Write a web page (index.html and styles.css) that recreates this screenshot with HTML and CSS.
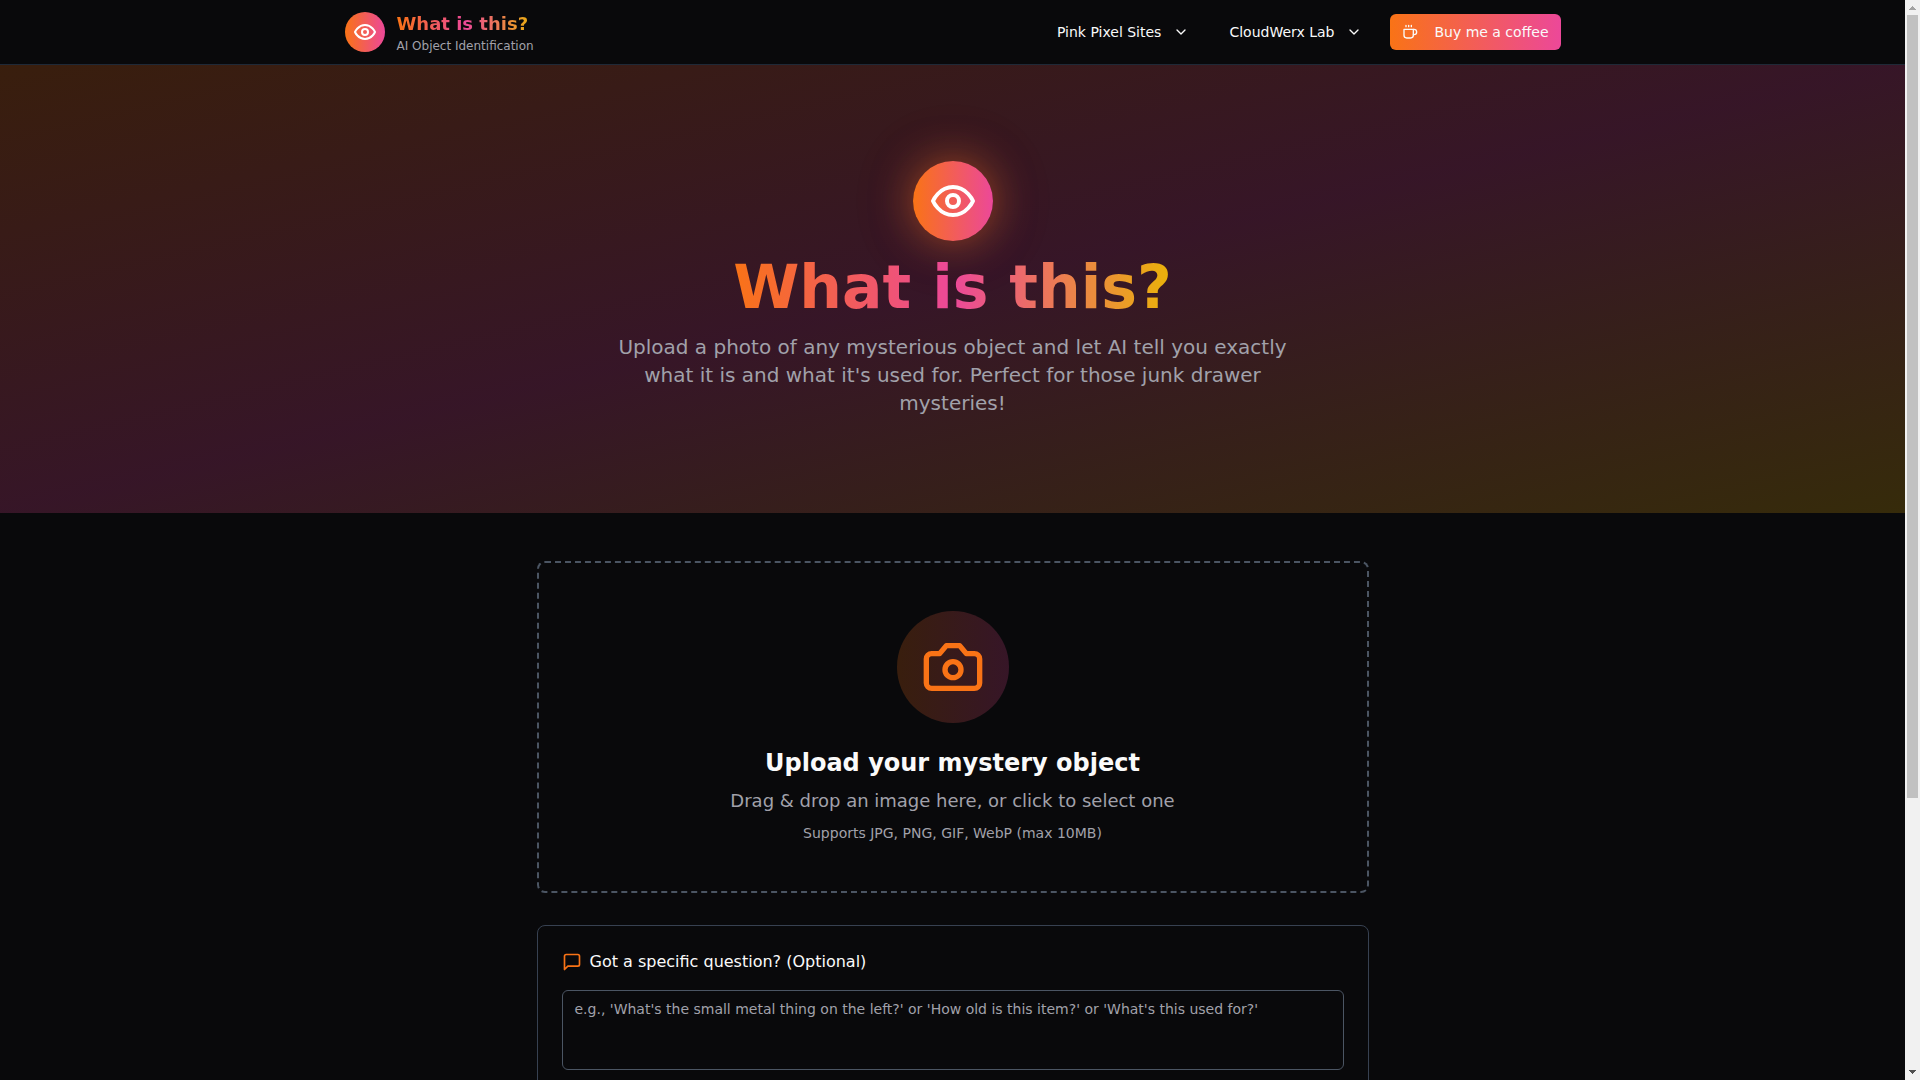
FILE: index.html
```html
<!DOCTYPE html>
<html lang="en">
<head>
<meta charset="utf-8">
<meta name="viewport" content="width=device-width, initial-scale=1">
<title>What is this? - AI Object Identification</title>
<link rel="stylesheet" href="styles.css">
</head>
<body>
<div class="page">
  <header class="site-header">
    <div class="header-inner">
      <a class="brand" href="#">
        <span class="brand-mark">
          <svg class="icon icon-24" viewBox="0 0 24 24" aria-hidden="true"><path d="M2 12s3-7 10-7 10 7 10 7-3 7-10 7-10-7-10-7Z"/><circle cx="12" cy="12" r="3"/></svg>
        </span>
        <span class="brand-text">
          <span class="brand-name gradient-text">What is this?</span>
          <span class="brand-tag">AI Object Identification</span>
        </span>
      </a>
      <nav class="nav">
        <button class="nav-button" type="button">Pink Pixel Sites
          <svg class="icon icon-16" viewBox="0 0 24 24" aria-hidden="true"><path d="m6 9 6 6 6-6"/></svg>
        </button>
        <button class="nav-button" type="button">CloudWerx Lab
          <svg class="icon icon-16" viewBox="0 0 24 24" aria-hidden="true"><path d="m6 9 6 6 6-6"/></svg>
        </button>
        <a class="coffee-button" href="#">
          <svg class="icon icon-16" viewBox="0 0 24 24" aria-hidden="true"><path d="M17 8h1a4 4 0 1 1 0 8h-1"/><path d="M3 8h14v9a4 4 0 0 1-4 4H7a4 4 0 0 1-4-4Z"/><path d="M6 2v2M10 2v2M14 2v2"/></svg>
          Buy me a coffee
        </a>
      </nav>
    </div>
  </header>

  <section class="hero">
    <div class="hero-mark">
      <svg class="icon icon-48" viewBox="0 0 24 24" aria-hidden="true"><path d="M2 12s3-7 10-7 10 7 10 7-3 7-10 7-10-7-10-7Z"/><circle cx="12" cy="12" r="3"/></svg>
    </div>
    <h1 class="hero-title gradient-text">What is this?</h1>
    <p class="hero-lead">Upload a photo of any mysterious object and let AI tell you exactly what it is and what it's used for. Perfect for those junk drawer mysteries!</p>
  </section>

  <main class="content">
    <button class="dropzone" type="button">
      <span class="dropzone-mark">
        <svg class="icon icon-64" viewBox="0 0 24 24" aria-hidden="true"><path d="M14.5 4h-5L7 7H4a2 2 0 0 0-2 2v9a2 2 0 0 0 2 2h16a2 2 0 0 0 2-2V9a2 2 0 0 0-2-2h-3l-2.5-3z"/><circle cx="12" cy="13" r="3"/></svg>
      </span>
      <span class="dropzone-title">Upload your mystery object</span>
      <span class="dropzone-text">Drag &amp; drop an image here, or click to select one</span>
      <span class="dropzone-hint">Supports JPG, PNG, GIF, WebP (max 10MB)</span>
    </button>

    <section class="question-card">
      <label class="question-label" for="question">
        <svg class="icon icon-20" viewBox="0 0 24 24" aria-hidden="true"><path d="M21 15a2 2 0 0 1-2 2H7l-4 4V5a2 2 0 0 1 2-2h14a2 2 0 0 1 2 2z"/></svg>
        Got a specific question? (Optional)
      </label>
      <textarea class="question-input" id="question" placeholder="e.g., 'What's the small metal thing on the left?' or 'How old is this item?' or 'What's this used for?'"></textarea>
    </section>
  </main>
</div>

<div class="scrollbar" aria-hidden="true">
  <svg class="scroll-arrow scroll-arrow-up" viewBox="0 0 15 15" shape-rendering="crispEdges"><path d="M7 6h1v1h1v1h1v1h1v1H4V9h1V8h1V7h1z"/></svg>
  <div class="scroll-track"><div class="scroll-thumb"></div></div>
  <svg class="scroll-arrow scroll-arrow-down" viewBox="0 0 15 15" shape-rendering="crispEdges"><path d="M4 5h7v1h-1v1H9v1H8v1H7V8H6V7H5V6H4z"/></svg>
</div>
</body>
</html>
```
FILE: styles.css
```css
:root {
  --orange: #f97316;
  --pink: #ec4899;
  --yellow: #eab308;
  --background: #09090b;
  --foreground: #fafafa;
  --muted: #a1a1aa;
}

* {
  box-sizing: border-box;
}

body {
  display: flex;
  height: 100vh;
  margin: 0;
  overflow: hidden;
  background: var(--background);
  color: var(--foreground);
  font-family: "DejaVu Sans", sans-serif;
  font-size: 16px;
  line-height: 24px;
}

button,
textarea {
  font: inherit;
  color: inherit;
}

h1,
p {
  margin: 0;
}

.page {
  flex: 1;
  min-width: 0;
  overflow-y: auto;
  scrollbar-width: none;
}

.icon {
  flex: none;
  fill: none;
  stroke: currentColor;
  stroke-width: 2;
  stroke-linecap: round;
  stroke-linejoin: round;
}

.icon-16 { width: 16px; height: 16px; }
.icon-20 { width: 20px; height: 20px; }
.icon-24 { width: 24px; height: 24px; }
.icon-48 { width: 48px; height: 48px; }
.icon-64 { width: 64px; height: 64px; }

.gradient-text {
  background: linear-gradient(to right, var(--orange), var(--pink), var(--yellow));
  -webkit-background-clip: text;
  background-clip: text;
  color: transparent;
}

/* Header */
.site-header {
  border-bottom: 1px solid #1f2937;
}

.header-inner {
  display: flex;
  align-items: center;
  justify-content: space-between;
  max-width: 1280px;
  height: 64px;
  margin: 0 auto;
  padding: 0 32px;
}

.brand {
  display: flex;
  align-items: center;
  gap: 12px;
  text-decoration: none;
}

.brand-mark {
  display: grid;
  place-items: center;
  width: 40px;
  height: 40px;
  border-radius: 50%;
  background: linear-gradient(to right, var(--orange), var(--pink));
  color: #fff;
}

.brand-text {
  display: flex;
  flex-direction: column;
}

.brand-name {
  font-size: 18px;
  font-weight: 700;
  line-height: 28px;
}

.brand-tag {
  color: var(--muted);
  font-size: 12px;
  line-height: 16px;
}

.nav {
  display: flex;
  align-items: center;
  gap: 16px;
}

.nav-button,
.coffee-button {
  display: flex;
  align-items: center;
  height: 36px;
  padding: 0 12px;
  border: 0;
  border-radius: 6px;
  background: none;
  color: var(--foreground);
  font-size: 14px;
  line-height: 20px;
  text-decoration: none;
  white-space: nowrap;
}

.nav-button {
  gap: 12px;
}

.coffee-button {
  gap: 16px;
  background: linear-gradient(to right, var(--orange), var(--pink));
}

/* Hero */
.hero {
  display: flex;
  flex-direction: column;
  align-items: center;
  gap: 16px;
  padding: 96px 32px;
  background: linear-gradient(to bottom right, rgb(249 115 22 / 20%), rgb(236 72 153 / 20%), rgb(234 179 8 / 20%));
  text-align: center;
}

.hero-mark {
  display: grid;
  place-items: center;
  width: 80px;
  height: 80px;
  border-radius: 50%;
  background: linear-gradient(to right, var(--orange), var(--pink));
  box-shadow: 0 0 40px rgb(249 115 22 / 50%), 0 0 80px rgb(236 72 153 / 10%);
  color: #fff;
}

.hero-title {
  font-size: 60px;
  font-weight: 700;
  line-height: 60px;
}

.hero-lead {
  max-width: 672px;
  color: var(--muted);
  font-size: 20px;
  line-height: 28px;
}

/* Upload and question */
.content {
  display: flex;
  flex-direction: column;
  gap: 32px;
  max-width: 896px;
  margin: 0 auto;
  padding: 48px 32px 352px;
}

.dropzone {
  display: flex;
  flex-direction: column;
  align-items: center;
  gap: 8px;
  padding: 48px;
  border: 2px dashed #4b5563;
  border-radius: 8px;
  background: none;
  cursor: pointer;
}

.dropzone-mark {
  display: grid;
  place-items: center;
  width: 112px;
  height: 112px;
  margin-bottom: 16px;
  border-radius: 50%;
  background: linear-gradient(to right, rgb(249 115 22 / 20%), rgb(236 72 153 / 20%));
  color: var(--orange);
}

.dropzone-title {
  font-size: 24px;
  font-weight: 700;
  line-height: 32px;
}

.dropzone-text {
  color: var(--muted);
  font-size: 18px;
  line-height: 28px;
}

.dropzone-hint {
  color: var(--muted);
  font-size: 14px;
  line-height: 20px;
}

.question-card {
  display: flex;
  flex-direction: column;
  gap: 16px;
  padding: 24px;
  border: 1px solid #374151;
  border-radius: 8px;
}

.question-label {
  display: flex;
  align-items: center;
  gap: 8px;
}

.question-label .icon {
  color: var(--orange);
}

.question-input {
  display: block;
  width: 100%;
  height: 80px;
  padding: 8px 12px;
  border: 1px solid #4b5563;
  border-radius: 6px;
  background: var(--background);
  font-size: 14px;
  line-height: 20px;
  resize: none;
}

.question-input::placeholder {
  color: var(--muted);
  opacity: 1;
}

/* Scrollbar */
.scrollbar {
  display: flex;
  flex: none;
  flex-direction: column;
  width: 15px;
  background: #f1f1f1;
}

.scroll-arrow {
  flex: none;
  width: 15px;
  height: 15px;
}

.scroll-arrow-up { fill: #a3a3a3; }
.scroll-arrow-down { fill: #505050; }

.scroll-track {
  flex: 1;
  padding: 0 2px;
}

.scroll-thumb {
  height: 74.6%;
  background: #c1c1c1;
}
```
